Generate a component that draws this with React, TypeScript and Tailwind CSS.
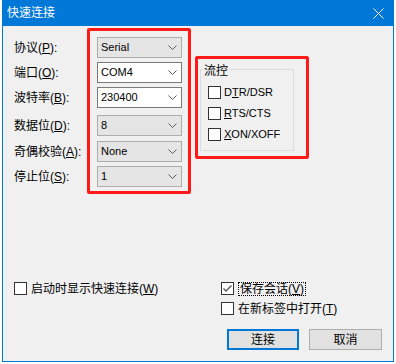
import React from 'react';

const cjk = '"Liberation Sans", "Noto Sans CJK SC", sans-serif';

function Key({ k }: { k: string }) {
  return (
    <span>
      (<span className="underline underline-offset-[1px]">{k}</span>)
    </span>
  );
}

function Combo({ value, editable, mt }: { value: string; editable?: boolean; mt: string }) {
  return (
    <div
      className={`${mt} h-[21px] w-[85px] flex items-center justify-between border pl-[3px] pr-[4px] ${
        editable ? 'bg-white border-[#7a7a7a]' : 'bg-[#e5e5e5] border-[#adadad]'
      }`}
    >
      <span className="text-[11px] text-black">{value}</span>
      <svg width="9" height="5" viewBox="0 0 9 5">
        <path d="M0.5 0.5 L4.5 4.5 L8.5 0.5" fill="none" stroke="#5a5a5a" strokeWidth="1" />
      </svg>
    </div>
  );
}

function Check({ checked }: { checked?: boolean }) {
  return (
    <span className="w-[13px] h-[13px] shrink-0 border border-[#333] bg-white flex items-center justify-center">
      {checked && (
        <svg width="11" height="11" viewBox="0 0 11 11">
          <path d="M1.5 5.5 L4 8 L9.5 2.5" fill="none" stroke="#555" strokeWidth="1.3" />
        </svg>
      )}
    </span>
  );
}

const rows: { label: string; key: string; value: string; editable?: boolean; mt: string }[] = [
  { label: '协议', key: 'P', value: 'Serial', mt: 'mt-0' },
  { label: '端口', key: 'O', value: 'COM4', editable: true, mt: 'mt-[4px]' },
  { label: '波特率', key: 'B', value: '230400', editable: true, mt: 'mt-[4px]' },
  { label: '数据位', key: 'D', value: '8', mt: 'mt-[7px]' },
  { label: '奇偶校验', key: 'A', value: 'None', mt: 'mt-[5px]' },
  { label: '停止位', key: 'S', value: '1', mt: 'mt-[4px]' },
];

export default function App() {
  return (
    <div className="w-[396px] h-[364px] bg-white" style={{ fontFamily: cjk }}>
      <div className="ml-[2px] w-[392px] h-[362px] flex flex-col border-x border-b border-[#0078d7] bg-[#f0f0f0]">
        {/* Title bar */}
        <div className="h-[26px] bg-[#0078d7] flex items-center justify-between pl-[4px] pr-[9px]">
          <span className="text-[12px] text-white">快速连接</span>
          <svg width="11" height="11" viewBox="0 0 11 11">
            <path d="M0.5 0.5 L10.5 10.5 M10.5 0.5 L0.5 10.5" stroke="#fff" strokeWidth="1" />
          </svg>
        </div>

        {/* Top section */}
        <div className="flex pl-[11px]">
          <div className="w-[73px] pt-[11px] flex flex-col">
            {rows.map((r) => (
              <div key={r.key} className={`${r.mt} h-[21px] flex items-center text-[12px] text-black`}>
                {r.label}
                <Key k={r.key} />:
              </div>
            ))}
          </div>

          <div className="mt-[2px] w-[104px] h-[166px] border-[3px] border-[#ff1a1a] rounded-[2px] pl-[7px] pt-[6px] flex flex-col">
            {rows.map((r) => (
              <Combo key={r.key} value={r.value} editable={r.editable} mt={r.mt} />
            ))}
          </div>

          <div className="ml-[4px] mt-[30px] w-[114px] h-[103px] border-[3px] border-[#ff1a1a] rounded-[2px] pl-[2px] pt-[10px]">
            <div className="relative w-[94px] h-[82px] border border-[#dcdcdc] pl-[7px] pt-[16px] flex flex-col gap-[8px]">
              <span className="absolute left-[2px] top-[-8px] px-[1px] bg-[#f0f0f0] text-[12px] text-black">流控</span>
              <label className="flex items-center gap-[3px] text-[11px] text-black h-[13px]">
                <Check />
                <span>
                  D<span className="underline">T</span>R/DSR
                </span>
              </label>
              <label className="flex items-center gap-[3px] text-[11px] text-black h-[13px]">
                <Check />
                <span>
                  <span className="underline">R</span>TS/CTS
                </span>
              </label>
              <label className="flex items-center gap-[3px] text-[11px] text-black h-[13px]">
                <Check />
                <span>
                  <span className="underline">X</span>ON/XOFF
                </span>
              </label>
            </div>
          </div>
        </div>

        {/* Bottom section */}
        <div className="mt-[88px] flex pl-[11px]">
          <div className="w-[207px]">
            <label className="flex items-center gap-[4px] h-[13px] text-[12px] text-black">
              <Check />
              <span>
                启动时显示快速连接<Key k="W" />
              </span>
            </label>
          </div>
          <div className="flex flex-col">
            <label className="flex items-center gap-[4px] h-[13px] text-[12px] text-black">
              <Check checked />
              <span className="border border-dotted border-black px-[1px] leading-[12px]">
                保存会话<Key k="V" />
              </span>
            </label>
            <label className="mt-[7px] flex items-center gap-[4px] h-[13px] text-[12px] text-black">
              <Check />
              <span>
                在新标签中打开<Key k="T" />
              </span>
            </label>
            <div className="mt-[14px] ml-[6px] flex gap-[10px]">
              <button className="w-[72px] h-[21px] border-2 border-[#0078d7] bg-[#e1e1e1] text-[12px] text-black flex items-center justify-center">
                连接
              </button>
              <button className="w-[73px] h-[21px] border border-[#adadad] bg-[#e1e1e1] text-[12px] text-black flex items-center justify-center">
                取消
              </button>
            </div>
          </div>
        </div>
      </div>
    </div>
  );
}
